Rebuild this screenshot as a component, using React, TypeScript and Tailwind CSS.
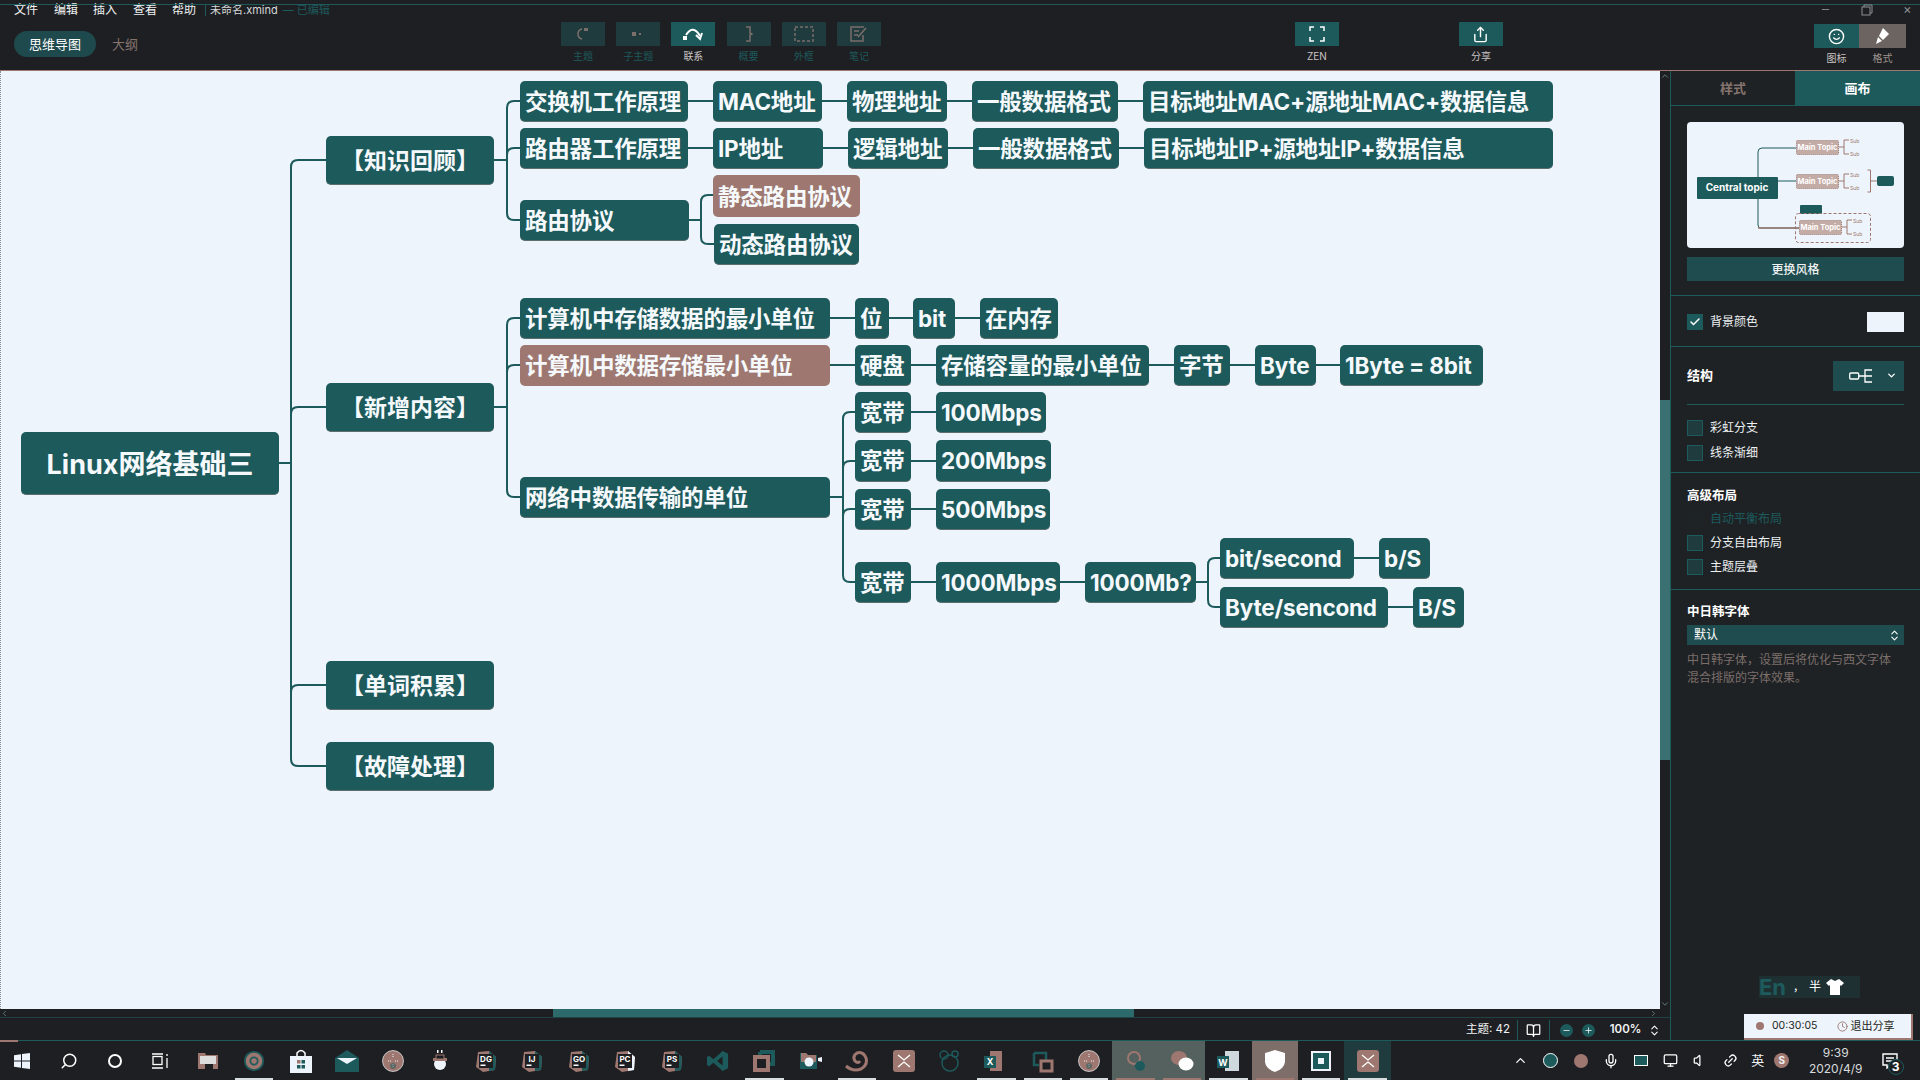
import React from "react";
import { Check, ChevronDown, ChevronsUpDown, ChevronUp, ChevronLeft, ChevronRight, BookOpen, Minus, Plus, Search, Chrome, Smile, Share, Mic, Monitor, Volume, Link2, Clock } from "lucide-react";

const TEAL = "#1d5a5c";
const ROSE = "#9e7870";
const LIGHT = "#edf4fb";

type N = { t: string; c: string; rose?: boolean; center?: boolean; big?: boolean };

const nodes: N[] = [
  { t: "Linux网络基础三", c: "left-[21px] top-[361px] w-[258px] h-[63px]", center: true, big: true },
  { t: "【知识回顾】", c: "left-[326px] top-[65px] w-[168px] h-[49px]", center: true },
  { t: "【新增内容】", c: "left-[326px] top-[312px] w-[168px] h-[49px]", center: true },
  { t: "【单词积累】", c: "left-[326px] top-[590px] w-[168px] h-[49px]", center: true },
  { t: "【故障处理】", c: "left-[326px] top-[671px] w-[168px] h-[49px]", center: true },
  { t: "交换机工作原理", c: "left-[520px] top-[10px] w-[168px] h-[41px]" },
  { t: "MAC地址", c: "left-[713px] top-[10px] w-[109px] h-[41px]" },
  { t: "物理地址", c: "left-[847px] top-[10px] w-[100px] h-[41px]" },
  { t: "一般数据格式", c: "left-[972px] top-[10px] w-[146px] h-[41px]" },
  { t: "目标地址MAC+源地址MAC+数据信息", c: "left-[1143px] top-[10px] w-[410px] h-[41px]" },
  { t: "路由器工作原理", c: "left-[520px] top-[57px] w-[168px] h-[41px]" },
  { t: "IP地址", c: "left-[713px] top-[57px] w-[110px] h-[41px]" },
  { t: "逻辑地址", c: "left-[848px] top-[57px] w-[100px] h-[41px]" },
  { t: "一般数据格式", c: "left-[973px] top-[57px] w-[146px] h-[41px]" },
  { t: "目标地址IP+源地址IP+数据信息", c: "left-[1144px] top-[57px] w-[409px] h-[41px]" },
  { t: "路由协议", c: "left-[520px] top-[129px] w-[169px] h-[41px]" },
  { t: "静态路由协议", c: "left-[713px] top-[104px] w-[147px] h-[42px]", rose: true },
  { t: "动态路由协议", c: "left-[714px] top-[153px] w-[145px] h-[41px]" },
  { t: "计算机中存储数据的最小单位", c: "left-[520px] top-[227px] w-[310px] h-[41px]" },
  { t: "位", c: "left-[855px] top-[227px] w-[34px] h-[41px]" },
  { t: "bit", c: "left-[913px] top-[227px] w-[42px] h-[41px]" },
  { t: "在内存", c: "left-[980px] top-[227px] w-[78px] h-[41px]" },
  { t: "计算机中数据存储最小单位", c: "left-[520px] top-[274px] w-[310px] h-[41px]", rose: true },
  { t: "硬盘", c: "left-[855px] top-[274px] w-[56px] h-[41px]" },
  { t: "存储容量的最小单位", c: "left-[936px] top-[274px] w-[213px] h-[41px]" },
  { t: "字节", c: "left-[1174px] top-[274px] w-[56px] h-[41px]" },
  { t: "Byte", c: "left-[1255px] top-[274px] w-[61px] h-[41px]" },
  { t: "1Byte = 8bit", c: "left-[1340px] top-[274px] w-[143px] h-[41px]" },
  { t: "宽带", c: "left-[855px] top-[321px] w-[56px] h-[41px]" },
  { t: "100Mbps", c: "left-[936px] top-[321px] w-[110px] h-[41px]" },
  { t: "宽带", c: "left-[855px] top-[369px] w-[56px] h-[42px]" },
  { t: "200Mbps", c: "left-[936px] top-[369px] w-[115px] h-[42px]" },
  { t: "宽带", c: "left-[855px] top-[418px] w-[56px] h-[41px]" },
  { t: "500Mbps", c: "left-[936px] top-[418px] w-[114px] h-[41px]" },
  { t: "网络中数据传输的单位", c: "left-[520px] top-[406px] w-[310px] h-[41px]" },
  { t: "宽带", c: "left-[855px] top-[491px] w-[56px] h-[41px]" },
  { t: "1000Mbps", c: "left-[936px] top-[491px] w-[124px] h-[41px]" },
  { t: "1000Mb?", c: "left-[1085px] top-[491px] w-[111px] h-[41px]" },
  { t: "bit/second", c: "left-[1220px] top-[467px] w-[134px] h-[41px]" },
  { t: "b/S", c: "left-[1379px] top-[467px] w-[51px] h-[41px]" },
  { t: "Byte/sencond", c: "left-[1220px] top-[516px] w-[168px] h-[41px]" },
  { t: "B/S", c: "left-[1413px] top-[516px] w-[51px] h-[41px]" },
];

// y values are canvas-relative (page y - 71)
const hLines: [number, number, number][] = [
  [279, 291, 392],
  [494, 507, 89],
  [688, 713, 30], [822, 847, 30], [947, 972, 30], [1118, 1143, 30],
  [688, 713, 77], [823, 848, 77], [948, 973, 77], [1119, 1144, 77],
  [689, 701, 149],
  [494, 507, 336],
  [830, 855, 247], [889, 913, 247], [955, 980, 247],
  [830, 855, 294], [911, 936, 294], [1149, 1174, 294], [1230, 1255, 294], [1316, 1340, 294],
  [830, 843, 426],
  [911, 936, 341], [911, 936, 390], [911, 936, 438], [911, 936, 511], [1060, 1085, 511],
  [1196, 1208, 511],
  [1354, 1379, 487], [1388, 1413, 536],
];

function fork(x: number, ys: number[], endX: number) {
  const r = 7;
  const last = ys[ys.length - 1];
  return ys
    .map((y, i) => {
      if (i === 0) return `M${endX} ${y}H${x + r}Q${x} ${y} ${x} ${y + r}V${last - r}`;
      if (i === ys.length - 1) return `M${x} ${y - r}Q${x} ${y} ${x + r} ${y}H${endX}`;
      return `M${x} ${y + r}Q${x} ${y} ${x + r} ${y}H${endX}`;
    })
    .join(" ");
}

function Connectors() {
  const d = [
    fork(291, [89, 336, 614, 695], 326),
    fork(507, [30, 77, 149], 520),
    fork(701, [124, 173], 714),
    fork(507, [247, 294, 426], 520),
    fork(843, [341, 390, 438, 511], 855),
    fork(1208, [487, 536], 1220),
    ...hLines.map(([a, b, y]) => `M${a} ${y}H${b}`),
  ].join(" ");
  return (
    <svg className="absolute left-0 top-0" width="1660" height="938" fill="none">
      <path d={d} stroke={TEAL} strokeWidth="2" />
    </svg>
  );
}

function Node({ n }: { n: N }) {
  const size = n.big ? "text-[27px]" : n.center ? "text-[23px]" : "text-[22.5px] tracking-[-0.2px]";
  return (
    <div
      className={`absolute flex items-center rounded-[5px] whitespace-nowrap leading-none font-bold text-[#f5f9fc] pt-[2px] ${size} ${n.center ? "justify-center" : "pl-[5px]"} ${n.rose ? "bg-[#9e7870]" : "bg-[#1d5a5c] border-b border-b-[#5d6f6c]"} ${n.c}`}
    >
      {n.t}
    </div>
  );
}

function ToolBtn({ label, active, children, w = "w-[44px]" }: { label: string; active?: boolean; children: React.ReactNode; w?: string }) {
  return (
    <div className={`flex flex-col items-center ${w}`}>
      <div className={`w-full h-[24px] flex items-center justify-center ${active ? "bg-[#1d5a5c] text-white" : "bg-[#1f3b3e] text-[#7a6f6b]"}`}>{children}</div>
      <span className={`mt-[3px] text-[10px] leading-[14px] ${active ? "text-[#c9c4c2]" : "text-[#1d5a5c]"}`}>{label}</span>
    </div>
  );
}

function Box({ checked, dim }: { checked?: boolean; dim?: boolean }) {
  return (
    <span className={`w-[16px] h-[16px] flex items-center justify-center ${checked ? "bg-[#1d5a5c]" : dim ? "bg-[#1e2326]" : "bg-[#1f3b3e] border border-[#1d5a5c]"}`}>
      {checked && <Check size={12} strokeWidth={3} color="#fff" />}
    </span>
  );
}

function Row({ label, checked, dim }: { label: string; checked?: boolean; dim?: boolean }) {
  return (
    <div className="flex items-center gap-[7px] h-[16px]">
      <Box checked={checked} dim={dim} />
      <span className={`text-[12px] leading-none ${dim ? "text-[#1d5a5c]" : "text-[#eef1f3]"}`}>{label}</span>
    </div>
  );
}

function Preview() {
  return (
    <svg className="w-[217px] h-[126px] rounded-[4px]" viewBox="0 0 217 126" fill="none">
      <rect width="217" height="126" fill={LIGHT} />
      <path d="M91 66H71M71 72V30Q71 26 75 26H109M71 77V103Q71 106 74 106H112M91 59H109" stroke={TEAL} strokeWidth="1" />
      <path d="M71 106H112" stroke={ROSE} strokeWidth="1.5" />
      <rect x="10" y="55" width="81" height="22" rx="1" fill={TEAL} />
      <text x="50" y="69" textAnchor="middle" fontSize="10" fontWeight="700" fill="#fff" fontFamily="Inter">Central topic</text>
      {[[109, 18], [109, 52], [112, 98]].map(([x, y], i) => (
        <g key={i}>
          <rect x={x + 0.5} y={y + 0.5} width="42" height="14" rx="1" fill="#c4aca6" stroke={ROSE} strokeDasharray="1 1" />
          <text x={x + 21.5} y={y + 10} textAnchor="middle" fontSize="7.5" fontWeight="700" fill="#fff" fontFamily="Inter">Main Topic</text>
          <path d={`M${x + 43} ${y + 7}H${x + 48}M${x + 53} ${y}H${x + 48}V${y + 14}H${x + 53}`} stroke={ROSE} strokeWidth="1" />
          <text x={x + 54} y={y + 3} fontSize="5" fill={ROSE} fontFamily="Inter">Sub</text>
          <text x={x + 54} y={y + 16} fontSize="5" fill={ROSE} fontFamily="Inter">Sub</text>
        </g>
      ))}
      <path d="M180.5 48H183.5V70H180.5M184 59H190" stroke={ROSE} strokeWidth="1" />
      <rect x="190" y="54" width="17" height="10" rx="2" fill={TEAL} />
      <rect x="113" y="83" width="22" height="9" rx="1" fill={TEAL} />
      <rect x="108.5" y="91.5" width="75" height="29" rx="3" stroke={ROSE} strokeDasharray="3 2" />
    </svg>
  );
}

function Jb({ t, a = ROSE, b = TEAL }: { t: string; a?: string; b?: string }) {
  return (
    <svg width="24" height="24" viewBox="0 0 24 24">
      <path d="M4 3L15 2L22 8L21 21L9 23L2 18Z" fill={a} />
      <path d="M15 2L22 8L21 21L15 22Z" fill={b} />
      <rect x="5" y="5" width="14" height="14" fill="#1e1f22" />
      <text x="12" y="13" textAnchor="middle" fontSize="8" fontWeight="700" fill="#fff" fontFamily="Inter">{t}</text>
      <rect x="6.5" y="15.5" width="5" height="1.5" fill="#fff" />
    </svg>
  );
}

function Rosette() {
  return (
    <svg width="22" height="22" viewBox="0 0 22 22">
      <circle cx="11" cy="11" r="10.5" fill={ROSE} stroke={LIGHT} strokeWidth="0.7" />
      <path d="M11 4V8M6 11H9M13 11H16M11 14V18" stroke={LIGHT} strokeDasharray="1 1" />
      <circle cx="11" cy="16" r="3" fill={TEAL} opacity="0.5" />
    </svg>
  );
}

const Xm = () => (
  <span className="w-[22px] h-[22px] rounded-[3px] bg-[#9e7870] flex items-center justify-center">
    <svg width="14" height="14" viewBox="0 0 14 14" fill="none" stroke="#fff" strokeWidth="1.3"><path d="M1 1L7 6L13 1M1 13L7 8L13 13" /></svg>
  </span>
);

const taskIcons: React.ReactNode[] = [
  <svg width="16" height="16" viewBox="0 0 16 16" fill={LIGHT}><path d="M0 2.3L7 1.3V7.5H0ZM8 1.1L16 0V7.5H8ZM0 8.5H7V14.7L0 13.7ZM8 8.5H16V16L8 14.9Z" /></svg>,
  <Search size={18} color="#fff" className="-scale-x-100" />,
  <span className="w-[14px] h-[14px] rounded-full border-[2px] border-white" />,
  <svg width="18" height="16" viewBox="0 0 18 16" fill="none" stroke="#fff" strokeWidth="1.3"><rect x="1" y="3.5" width="9" height="8" /><path d="M0 1H11M0 15H11M15 1V3M15 5V15" /></svg>,
  <svg width="20" height="18" viewBox="0 0 20 18"><path d="M0 1H7L8 3H20V17H0Z" fill={ROSE} /><rect x="2" y="4" width="16" height="8" fill="#ddd" /><rect x="7" y="12" width="8" height="5" fill="#1e1f22" /></svg>,
  <Chrome size={22} color={TEAL} fill={ROSE} />,
  <svg width="22" height="24" viewBox="0 0 22 24"><path d="M7 7V4Q11 -1 15 4V7" fill="none" stroke="#fff" strokeWidth="1.5" /><rect y="7" width="22" height="17" fill={LIGHT} /><rect x="7" y="11" width="3.5" height="3.5" fill={ROSE} /><rect x="11.5" y="11" width="3.5" height="3.5" fill={TEAL} /><rect x="7" y="16" width="3.5" height="3.5" fill={TEAL} /><rect x="11.5" y="16" width="3.5" height="3.5" fill={TEAL} /></svg>,
  <svg width="24" height="22" viewBox="0 0 24 22"><path d="M0 8L12 0L24 8V22H0Z" fill={TEAL} /><path d="M2 8H22L12 14Z" fill={LIGHT} /></svg>,
  <Rosette />,
  <svg width="16" height="24" viewBox="0 0 16 24"><circle cx="8" cy="15" r="6" fill={LIGHT} /><rect x="1" y="9" width="14" height="3" fill={ROSE} /><rect x="4" y="6" width="8" height="4" fill="#1e1f22" stroke={ROSE} /><rect x="5" y="1" width="1.5" height="3" fill="#fff" /><rect x="9" y="1" width="1.5" height="3" fill="#fff" /></svg>,
  <Jb t="DG" />,
  <Jb t="IJ" />,
  <Jb t="GO" />,
  <Jb t="PC" a={ROSE} b="#edf4fb" />,
  <Jb t="PS" />,
  <svg width="22" height="22" viewBox="0 0 24 24" fill={TEAL}><path d="M17 1L23 4V20L17 23L7 14L2 18L0 16V8L2 6L7 10ZM17 7L11 12L17 17Z" /></svg>,
  <svg width="24" height="24" viewBox="0 0 24 24" fill="none"><path d="M8 3H21V15H16M8 3V8" stroke={TEAL} strokeWidth="4" /><path d="M3 8H16V21H3Z" stroke={ROSE} strokeWidth="4" /></svg>,
  <svg width="22" height="18" viewBox="0 0 22 18"><path d="M0 1H6L8 3H17V17H0Z" fill={TEAL} /><path d="M1 1H6L8 3H16V10H1Z" fill={ROSE} /><circle cx="9" cy="10" r="4.5" fill={LIGHT} /><path d="M18 6L22 5V10L18 9Z" fill={LIGHT} /></svg>,
  <svg width="24" height="22" viewBox="0 0 24 22" fill="none"><path d="M1 16Q8 22 16 19Q23 15 21 8Q18 1 12 3Q7 6 10 11Q13 14 15 11" stroke={ROSE} strokeWidth="3" /></svg>,
  <Xm />,
  <svg width="24" height="22" viewBox="0 0 24 22" fill="none" stroke={TEAL} strokeWidth="1.5"><circle cx="12" cy="13" r="8" /><circle cx="6" cy="5" r="4" /><circle cx="17" cy="4" r="3" /></svg>,
  <svg width="24" height="22" viewBox="0 0 24 22"><rect x="6" y="1" width="12" height="20" fill={ROSE} /><rect x="0" y="6" width="12" height="12" fill={TEAL} /><text x="6" y="15" textAnchor="middle" fontSize="9" fontWeight="700" fill="#fff" fontFamily="Inter">X</text></svg>,
  <svg width="24" height="24" viewBox="0 0 24 24" fill="none"><path d="M3 4H15V11M3 4V16H8" stroke={TEAL} strokeWidth="2.5" /><path d="M10 12H21V22H10Z" stroke={ROSE} strokeWidth="3" /></svg>,
  <Rosette />,
  <svg width="22" height="22" viewBox="0 0 22 22" fill="none"><circle cx="9" cy="8" r="6" stroke={ROSE} strokeWidth="2" /><circle cx="15" cy="16" r="5" fill={TEAL} /></svg>,
  <svg width="24" height="22" viewBox="0 0 24 22"><ellipse cx="9" cy="8" rx="8" ry="7" fill={ROSE} /><ellipse cx="16" cy="14" rx="7.5" ry="6.5" fill="#fff" /></svg>,
  <svg width="22" height="22" viewBox="0 0 22 22"><rect x="8" y="1" width="14" height="20" fill="#cfd8dc" /><rect x="0" y="6" width="12" height="12" fill={TEAL} /><text x="6" y="15.5" textAnchor="middle" fontSize="9" fontWeight="700" fill="#fff" fontFamily="Inter">W</text></svg>,
  <svg width="22" height="24" viewBox="0 0 22 24"><path d="M11 1L21 4V13Q20 20 11 23Q2 20 1 13V4Z" fill="#fff" /></svg>,
  <svg width="20" height="20" viewBox="0 0 20 20"><rect width="20" height="20" fill={LIGHT} /><rect x="2" y="2" width="16" height="16" fill={TEAL} /><rect x="7" y="7" width="6" height="6" fill={LIGHT} /></svg>,
  <Xm />,
];

const running: Record<number, string> = {
  5: "bg-[#d8dde0]", 16: "bg-[#d8dde0]", 18: "bg-[#d8dde0]", 21: "bg-[#d8dde0]", 22: "bg-[#d8dde0]", 23: "bg-[#d8dde0]",
  24: "bg-[#9e7870]", 25: "bg-[#9e7870]", 26: "bg-[#d8dde0]", 27: "bg-[#9e7870]", 28: "bg-[#d8dde0]", 29: "bg-[#d8dde0]",
};
const hi: Record<number, string> = { 24: "bg-[#54615f]", 25: "bg-[#54615f]", 27: "bg-[#7d6e69]", 29: "bg-[#1f3b3e]" };

export default function App() {
  return (
    <div className="relative w-[1920px] h-[1080px] overflow-hidden flex flex-col bg-[#1e1f22] font-['Inter','Noto_Sans_CJK_SC',sans-serif] text-white">
      {/* window frame accents */}
      <div className="absolute left-0 top-[2px] w-[18px] h-[3px] bg-[#9e7870]" />
      <div className="absolute left-0 top-[2px] w-[2px] h-[19px] bg-[#9e7870]" />
      <div className="absolute left-[931px] top-0 w-[57px] h-[4px] bg-[#8a7570]" />
      <div className="absolute right-0 top-[2px] w-[20px] h-[3px] bg-[#9e7870]" />
      <div className="absolute right-0 top-[2px] w-[2px] h-[19px] bg-[#9e7870]" />

      {/* title + toolbar */}
      <header className="relative h-[71px] shrink-0 flex border-b border-b-[#9e7870] bg-[#1e1f22]">
        <div className="absolute left-0 right-0 top-[4px] h-px bg-[#1d5a5c]" />
        <div className="w-[561px] shrink-0 flex flex-col pl-[14px] pt-[2px]">
          <div className="flex items-center h-[16px] text-[12px] leading-none text-[#f0f2f4]">
            <span className="w-[40px]">文件</span>
            <span className="w-[39px]">编辑</span>
            <span className="w-[40px]">插入</span>
            <span className="w-[39px]">查看</span>
            <span className="w-[33px]">帮助</span>
            <span className="w-px h-[12px] bg-[#1d5a5c] mr-[4px]" />
            <span className="text-[11px] text-[#d6d8da]">未命名.xmind</span>
            <span className="ml-[5px] text-[11px] text-[#1d5a5c]">— 已编辑</span>
          </div>
          <div className="flex items-center mt-[13px]">
            <span className="w-[82px] h-[26px] rounded-full bg-[#1f4a4d] flex items-center justify-center text-[13px] leading-none text-white">思维导图</span>
            <span className="ml-[16px] text-[13px] leading-none text-[#85736e]">大纲</span>
          </div>
        </div>
        <div className="flex gap-[11.2px] pt-[22px]">
          <ToolBtn label="主题"><svg width="14" height="14" viewBox="0 0 14 14" fill="none" stroke="currentColor" strokeWidth="1.5"><path d="M6 2Q2 3 2 7Q2 11 6 12" /><rect x="8" y="1" width="4" height="3" fill="currentColor" stroke="none" /></svg></ToolBtn>
          <ToolBtn label="子主题"><svg width="12" height="6" viewBox="0 0 12 6" fill="currentColor"><rect x="0" y="1" width="4" height="4" /><rect x="7" y="2" width="2" height="2" /></svg></ToolBtn>
          <ToolBtn label="联系" active><svg width="22" height="16" viewBox="0 0 22 16" fill="none" stroke="#fff" strokeWidth="2"><rect x="1" y="10" width="4" height="4" fill="#fff" stroke="none" /><path d="M4 9Q11 -2 18 10" /><path d="M14 9L18 13L20 7" /></svg></ToolBtn>
          <ToolBtn label="概要"><svg width="8" height="16" viewBox="0 0 8 16" fill="none" stroke="currentColor" strokeWidth="1.5"><path d="M1 1H5V7L7 8L5 9V15H1" /></svg></ToolBtn>
          <ToolBtn label="外框"><svg width="20" height="16" viewBox="0 0 20 16" fill="none" stroke="currentColor" strokeWidth="1.5" strokeDasharray="3 2"><rect x="1" y="1" width="18" height="14" /></svg></ToolBtn>
          <ToolBtn label="笔记"><svg width="18" height="16" viewBox="0 0 18 16" fill="none" stroke="currentColor" strokeWidth="1.5"><path d="M14 1H1V15H13V9M4 5H9M4 9H8M8 11L16 2" /></svg></ToolBtn>
        </div>
        <div className="flex ml-[414px] pt-[22px]">
          <ToolBtn label="ZEN" active><svg width="16" height="16" viewBox="0 0 16 16" fill="none" stroke="#fff" strokeWidth="1.5"><path d="M5 1H1V5M11 1H15V5M5 15H1V11M11 15H15V11" /></svg></ToolBtn>
        </div>
        <div className="flex ml-[120px] pt-[22px]">
          <ToolBtn label="分享" active><Share size={17} color="#fff" /></ToolBtn>
        </div>
        <div className="flex ml-[311px] pt-[24px]">
          <ToolBtn label="图标" w="w-[45px]" active><Smile size={17} color="#fff" /></ToolBtn>
          <div className="flex flex-col items-center w-[47px]">
            <div className="w-full h-[24px] bg-[#6b6460] flex items-center justify-center">
              <svg width="16" height="18" viewBox="0 0 16 18" fill="#fff"><path d="M9 1L15 7L9 13L5 9Z" /><path d="M4 10L8 14L2 17Z" /></svg>
            </div>
            <span className="mt-[3px] text-[10px] leading-[14px] text-[#9e9490]">格式</span>
          </div>
        </div>
        <div className="absolute right-[3px] top-[3px] flex items-center text-[#8b8f92]">
          <Minus size={11} className="mr-[30px]" />
          <svg width="12" height="12" viewBox="0 0 12 12" fill="none" stroke="#8b8f92"><rect x="1" y="3" width="8" height="8" /><path d="M3 3V1H11V9H9" /></svg>
          <span className="ml-[30px] text-[13px] leading-none w-[14px]">×</span>
        </div>
      </header>

      <div className="flex flex-1 min-h-0">
        {/* left column */}
        <div className="w-[1670px] shrink-0 flex flex-col">
          <div className="flex h-[938px]">
            <main className="relative w-[1660px] h-full overflow-hidden bg-[#edf4fb] border-l border-dotted border-l-[#8a8f92]">
              <div className="absolute -left-px top-0 w-[1660px] h-[938px]">
                <Connectors />
                {nodes.map((n, i) => <Node key={i} n={n} />)}
              </div>
            </main>
            <div className="w-[10px] flex flex-col items-center bg-[#1e1f22]">
              <ChevronUp size={10} color="#6f8f90" />
              <div className="mt-[319px] w-full h-[360px] bg-[#3a7071]" />
              <div className="flex-1" />
              <ChevronDown size={10} color="#6f8f90" />
            </div>
          </div>
          <div className="relative h-[9px] flex items-center border-b border-b-[#1f4245]">
            <ChevronLeft size={9} color="#6f8f90" className="absolute left-0" />
            <div className="ml-[553px] w-[581px] h-full bg-[#2c6a6b]" />
            <ChevronRight size={9} color="#6f8f90" className="absolute right-[12px]" />
          </div>
          <div className="flex-1 flex items-center justify-end text-[12px] leading-none text-[#f2f4f5] pr-[9px] pt-[2px]">
            <span className="mr-[7px] text-[11.5px]">主题: 42</span>
            <span className="w-[33px] h-[20px] border-x border-x-[#1d5a5c] flex items-center justify-center"><BookOpen size={15} color="#fff" /></span>
            <span className="w-[22px] flex justify-center ml-[5px]"><span className="w-[13px] h-[13px] rounded-full bg-[#1d5a5c] flex items-center justify-center"><Minus size={9} color="#fff" /></span></span>
            <span className="w-[22px] flex justify-center mr-[6px]"><span className="w-[13px] h-[13px] rounded-full bg-[#1d5a5c] flex items-center justify-center"><Plus size={9} color="#fff" /></span></span>
            <span className="w-[41px] text-center font-semibold text-[11.5px]">100%</span>
            <ChevronsUpDown size={13} color="#fff" className="ml-[2px]" />
          </div>
        </div>

        {/* right panel */}
        <aside className="relative w-[250px] shrink-0 border-l border-l-[#1d5a5c] flex flex-col bg-[#1e2225]">
          <div className="flex h-[35px] border-b border-b-[#1d5a5c]">
            <div className="w-[124px] flex items-center justify-center pt-[2px] text-[13px] font-bold text-[#85736e]">样式</div>
            <div className="flex-1 flex items-center justify-center pt-[2px] bg-[#1d5a5c] text-[13px] font-bold text-white">画布</div>
          </div>
          <div className="pl-[16px] pr-[16px] pt-[16px]">
            <Preview />
            <div className="mt-[9px] h-[24px] pt-[2px] bg-[#1f4c4f] flex items-center justify-center text-[12px] font-medium text-[#f0f2f4]">更换风格</div>
          </div>
          <div className="mt-[14px] h-px bg-[#1d5a5c]" />
          <div className="h-[50px] pl-[16px] pr-[16px] pt-[2px] flex items-center justify-between">
            <Row label="背景颜色" checked />
            <span className="w-[37px] h-[20px] bg-[#edf4fb]" />
          </div>
          <div className="h-px bg-[#1d5a5c]" />
          <div className="h-[57px] pl-[16px] pr-[16px] flex items-center justify-between">
            <span className="text-[13px] font-bold">结构</span>
            <span className="w-[71px] h-[30px] bg-[#1f4c4f] flex items-center justify-end pr-[7px] gap-[12px]">
              <svg width="26" height="14" viewBox="0 0 24 14" fill="none" stroke="#fff" strokeWidth="1.3"><rect x="0.7" y="4" width="9" height="6" rx="1" /><path d="M10 7H16M23 1H16V13H23M16 7H23" /></svg>
              <ChevronDown size={11} color="#fff" strokeWidth={3} />
            </span>
          </div>
          <div className="mx-[16px] h-px bg-[#1d5a5c]" />
          <div className="pl-[16px] pt-[15px] flex flex-col gap-[9px] h-[67px]">
            <Row label="彩虹分支" />
            <Row label="线条渐细" />
          </div>
          <div className="h-px bg-[#1d5a5c]" />
          <div className="pl-[16px] pt-[15px] h-[116px]">
            <div className="text-[12.5px] leading-[16px] font-bold">高级布局</div>
            <div className="mt-[7px] flex flex-col gap-[8px]">
              <Row label="自动平衡布局" dim />
              <Row label="分支自由布局" />
              <Row label="主题层叠" />
            </div>
          </div>
          <div className="h-px bg-[#1d5a5c]" />
          <div className="pl-[16px] pr-[16px] pt-[14px]">
            <div className="text-[12.5px] leading-[16px] font-bold">中日韩字体</div>
            <div className="mt-[5px] h-[20px] bg-[#1f4c4f] flex items-center justify-between pl-[7px] pr-[3px] text-[12px]">
              默认
              <ChevronsUpDown size={13} color="#fff" />
            </div>
            <p className="mt-[6px] w-[206px] text-[12px] leading-[18px] text-[#7c6e6a]">中日韩字体，设置后将优化与西文字体混合排版的字体效果。</p>
          </div>

          {/* floating IME + recording widgets */}
          <div className="absolute left-[88px] top-[905px] h-[22px] w-[101px] flex items-center gap-[5px] bg-[#1f3033] text-white">
            <span className="text-[22px] leading-none font-bold text-[#1d5a5c]">En</span>
            <span className="text-[11px] leading-none ml-[2px]">，</span>
            <span className="text-[12px] leading-none">半</span>
            <svg width="18" height="16" viewBox="0 0 18 16" fill="#fff"><path d="M5 0L9 2L13 0L18 4L15 7L14 6V16H4V6L3 7L0 4Z" /></svg>
          </div>
          <div className="absolute left-[73px] top-[943px] w-[169px] h-[26px] bg-[#edf4fb] border-b-2 border-r-2 border-[#9e7870] flex items-center pl-[12px] text-[10.5px] leading-none text-[#1e1f22]">
            <span className="w-[8px] h-[8px] rounded-full bg-[#9e7870]" />
            <span className="ml-[8px]">00:30:05</span>
            <Clock size={11} color="#9e7870" className="ml-[20px]" />
            <span className="ml-[2px] text-[11px]">退出分享</span>
          </div>
        </aside>
      </div>

      {/* taskbar */}
      <footer className="relative h-[40px] shrink-0 flex border-t border-t-[#1d5a5c] bg-[#1e1f22]">
        <div className="absolute left-0 -top-px w-[18px] h-[2px] bg-[#9e7870]" />
        <div className="flex h-full -ml-[1px]">
          {taskIcons.map((ic, i) => (
            <div key={i} className={`relative w-[46.4px] h-full flex items-center justify-center ${hi[i] ?? ""}`}>
              {ic}
              {running[i] && <span className={`absolute left-[4px] right-[4px] bottom-0 h-[2px] ${running[i]}`} />}
            </div>
          ))}
        </div>
        <div className="ml-[115px] flex items-center text-[#f0f2f4]">
          <span className="w-[30px] flex justify-center"><ChevronUp size={15} color="#fff" /></span>
          <span className="w-[30px] flex justify-center"><span className="w-[15px] h-[15px] rounded-full bg-[#1d5a5c] border border-white" /></span>
          <span className="w-[30px] flex justify-center"><span className="w-[14px] h-[14px] rounded-full bg-[#9e7870]" /></span>
          <span className="w-[30px] flex justify-center"><Mic size={16} color="#fff" /></span>
          <span className="w-[30px] flex justify-center"><span className="w-[14px] h-[11px] bg-[#1d5a5c] border border-white" /></span>
          <span className="w-[30px] flex justify-center"><Monitor size={15} color="#fff" /></span>
          <span className="w-[30px] flex justify-center"><Volume size={15} color="#fff" /></span>
          <span className="w-[30px] flex justify-center"><Link2 size={15} color="#fff" className="-rotate-45" /></span>
          <span className="w-[24px] text-center text-[13px] leading-none">英</span>
          <span className="w-[24px] flex justify-center"><span className="w-[15px] h-[15px] rounded-full bg-[#9e7870] text-[10px] leading-[15px] text-center font-bold">S</span></span>
          <span className="w-[84px] flex flex-col items-center gap-[3px] text-[12px] leading-[13px] text-[#d9dcde]">
            <span>9:39</span>
            <span>2020/4/9</span>
          </span>
          <span className="relative w-[24px] flex justify-center">
            <svg width="16" height="16" viewBox="0 0 16 16" fill="none" stroke="#fff" strokeWidth="1.4"><path d="M1 1H15V12H8L5 15V12H1ZM4 5H12M4 8H12" /></svg>
            <span className="absolute left-[10px] top-[6px] w-[16px] h-[16px] rounded-full bg-[#1e1f22] border border-[#1d5a5c] text-[12px] leading-[14px] text-center font-bold text-white">3</span>
          </span>
        </div>
      </footer>
    </div>
  );
}
